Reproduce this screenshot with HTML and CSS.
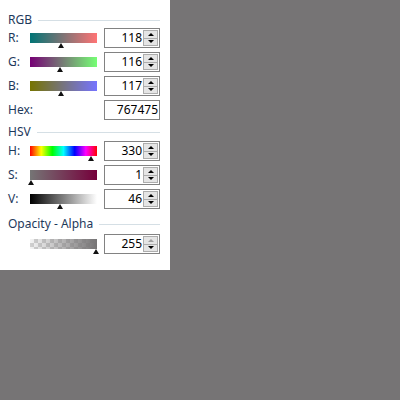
FILE: index.html
```html
<!DOCTYPE html>
<html>
<head>
<meta charset="utf-8">
<link rel="stylesheet" href="styles.css">
</head>
<body>
<div class="panel">
  <div class="hdr hdr-rgb"><span>RGB</span><i class="rule"></i></div>
  <div class="rows">
    <div class="row">
      <span class="lbl">R:</span>
      <div class="slider"><div class="track tr-r"></div><div class="thumb" style="left:28px"></div></div>
      <div class="num"><span class="val">118</span><div class="spin"><b class="up"></b><b class="dn"></b></div></div>
    </div>
    <div class="row">
      <span class="lbl">G:</span>
      <div class="slider"><div class="track tr-g"></div><div class="thumb" style="left:27px"></div></div>
      <div class="num"><span class="val">116</span><div class="spin"><b class="up"></b><b class="dn"></b></div></div>
    </div>
    <div class="row">
      <span class="lbl">B:</span>
      <div class="slider"><div class="track tr-b"></div><div class="thumb" style="left:28px"></div></div>
      <div class="num"><span class="val">117</span><div class="spin"><b class="up"></b><b class="dn"></b></div></div>
    </div>
    <div class="row">
      <span class="lbl">Hex:</span>
      <div class="slider"></div>
      <div class="num hex"><span class="val">767475</span></div>
    </div>
  </div>
  <div class="hdr hdr-hsv"><span>HSV</span><i class="rule"></i></div>
  <div class="rows">
    <div class="row">
      <span class="lbl">H:</span>
      <div class="slider"><div class="track tr-h"></div><div class="thumb" style="left:58px"></div></div>
      <div class="num"><span class="val">330</span><div class="spin"><b class="up"></b><b class="dn"></b></div></div>
    </div>
    <div class="row">
      <span class="lbl">S:</span>
      <div class="slider"><div class="track tr-s"></div><div class="thumb" style="left:-2px"></div></div>
      <div class="num"><span class="val">1</span><div class="spin"><b class="up"></b><b class="dn"></b></div></div>
    </div>
    <div class="row">
      <span class="lbl">V:</span>
      <div class="slider"><div class="track tr-v"></div><div class="thumb" style="left:27px"></div></div>
      <div class="num"><span class="val">46</span><div class="spin"><b class="up"></b><b class="dn"></b></div></div>
    </div>
  </div>
  <div class="hdr hdr-alpha"><span>Opacity - Alpha</span><i class="rule"></i></div>
  <div class="rows">
    <div class="row">
      <span class="lbl"></span>
      <div class="slider"><div class="track tr-a"></div><div class="thumb" style="left:63px"></div></div>
      <div class="num"><span class="val">255</span><div class="spin"><b class="up off"></b><b class="dn"></b></div></div>
    </div>
  </div>
</div>
</body>
</html>
```
FILE: styles.css
```css
html, body {
  margin: 0;
  padding: 0;
  background: #767475;
}
body {
  font-family: "Noto Sans", "Open Sans", sans-serif;
  font-size: 12px;
  color: #1e395b;
}
.panel {
  width: 170px;
  height: 270px;
  box-sizing: border-box;
  background: #fff;
  padding: 12px 10px 0 8px;
}
.hdr {
  display: flex;
  align-items: center;
  height: 16px;
  line-height: 16px;
  gap: 6px;
}
.hdr .rule {
  flex: 1;
  height: 1px;
  background: #d5dfe5;
}
.hdr-hsv { margin-top: 4px; margin-bottom: 1px; }
.hdr-alpha { margin-top: 7px; margin-bottom: 2px; }
.rows {
  display: flex;
  flex-direction: column;
  gap: 4px;
}
.row {
  display: flex;
  align-items: center;
  height: 20px;
}
.lbl {
  width: 22px;
  line-height: 16px;
}
.slider {
  position: relative;
  width: 67px;
  height: 20px;
  margin-right: 7px;
}
.track {
  margin-top: 5px;
  height: 10px;
}
.tr-r { background: linear-gradient(to right, rgb(0,116,117), rgb(255,116,117)); }
.tr-g { background: linear-gradient(to right, rgb(118,0,117), rgb(118,255,117)); }
.tr-b { background: linear-gradient(to right, rgb(118,116,0), rgb(118,116,255)); }
.tr-h { background: linear-gradient(to right, #f00, #ff0 16.7%, #0f0 33.3%, #0ff 50%, #00f 66.7%, #f0f 83.3%, #f00); }
.tr-s { background: linear-gradient(to right, rgb(117,117,117), rgb(117,0,59)); }
.tr-v { background: linear-gradient(to right, #000, rgb(255,255,255)); }
.tr-a {
  background:
    linear-gradient(to right, rgba(118,116,117,0), rgb(118,116,117)),
    repeating-conic-gradient(#d0d0d0 0 25%, #f4f4f4 0 50%) 0 0 / 8px 8px;
}
.thumb {
  position: absolute;
  top: 15px;
  width: 0;
  height: 0;
  border-left: 3.5px solid transparent;
  border-right: 3.5px solid transparent;
  border-bottom: 5px solid #111;
}
.num {
  width: 56px;
  height: 20px;
  box-sizing: border-box;
  border: 1px solid #828282;
  display: flex;
  align-items: center;
  justify-content: flex-end;
  color: #000;
  background: #fff;
}
.val {
  padding-right: 1px;
  line-height: 16px;
}
.hex .val { padding-right: 1px; }
.spin {
  width: 15px;
  height: 16px;
  margin-right: 1px;
  display: flex;
  flex-direction: column;
}
.spin b {
  flex: 1;
  display: flex;
  align-items: center;
  justify-content: center;
  background: #e5e5e5;
  border: 1px solid #adadad;
  box-sizing: border-box;
}
.spin b + b { border-top: none; }
.spin b::before {
  content: "";
  width: 0;
  height: 0;
  border-left: 3px solid transparent;
  border-right: 3px solid transparent;
}
.spin .up::before { border-bottom: 3px solid #000; }
.spin .dn::before { border-top: 3px solid #000; }
.spin .up.off::before { border-bottom-color: #a0a0a0; }
```
